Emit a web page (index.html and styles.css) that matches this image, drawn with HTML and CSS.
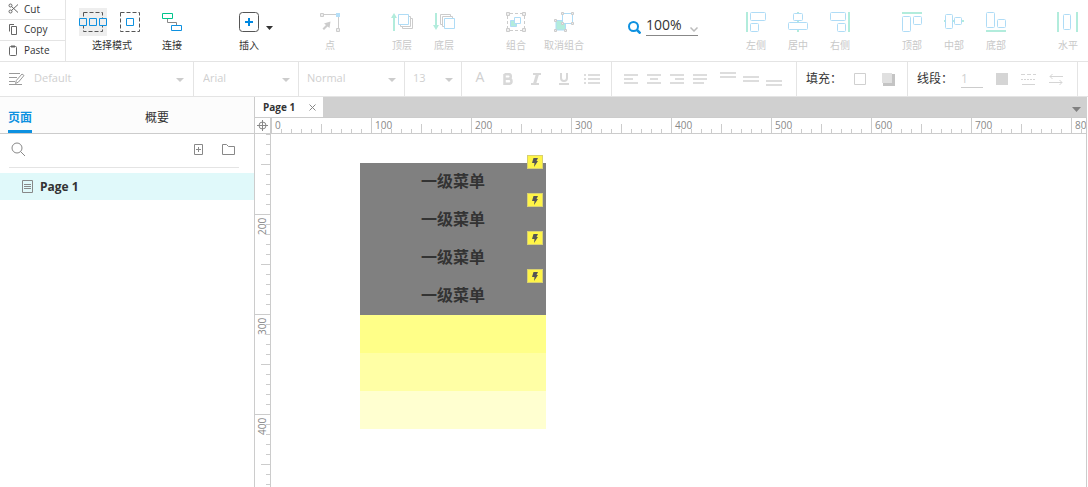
FILE: index.html
```html
<!DOCTYPE html>
<html lang="zh-CN">
<head>
<meta charset="utf-8">
<title>Page 1</title>
<link rel="stylesheet" href="styles.css">
</head>
<body>
<header class="toolbar">
  <div class="clipboard">
    <button class="clip"><svg width="11" height="11" viewBox="0 0 11 11" fill="none" stroke="#666"><circle cx="2.5" cy="2.5" r="1.5"/><circle cx="2.5" cy="8.5" r="1.5"/><path d="M3.5 3.5L10 9.5M3.5 7.5L10 1.5"/></svg>Cut</button>
    <button class="clip"><svg width="11" height="11" viewBox="0 0 11 11" fill="none" stroke="#666"><path d="M1.500 7.500V.500H6M3.500 2.500h5v8h-5z"/></svg>Copy</button>
    <button class="clip"><svg width="11" height="11" viewBox="0 0 11 11" fill="none" stroke="#666"><rect x="1.500" y="1.500" width="7" height="9" rx="1"/><path d="M3 1.500h4" stroke-width="2"/></svg>Paste</button>
  </div>
  <div class="tools">
    <button class="tool tool-mode">
      <span class="icons">
        <svg class="picked" width="28" height="28" viewBox="0 0 28 28" fill="none"><rect x="4.500" y="4.500" width="19" height="19" stroke="#555" stroke-dasharray="4 2"/><g fill="#eee" stroke="#0e91e0"><path d="M.5 10.500h7v7h-7zM10.500 10.500h7v7h-7zM20.500 10.500h7v7h-7z"/></g></svg>
        <svg width="20" height="20" viewBox="0 0 20 20" fill="none"><rect x=".5" y=".5" width="19" height="19" stroke="#555" stroke-dasharray="4 2"/><path d="M6.500 6.500h7v7h-7z" stroke="#0e91e0"/></svg>
      </span>
      <span>选择模式</span>
    </button>
    <button class="tool"><span class="icons"><svg width="20" height="20" viewBox="0 0 20 20" fill="none"><path d="M5.500 7v3.500h9V13" stroke="#888"/><path d="M.5 1.500h10v5H.5z" stroke="#00c48c"/><path d="M9.500 13.500h10v5h-10z" stroke="#0e91e0"/></svg></span><span>连接</span></button>
    <button class="tool tool-insert"><span class="icons"><svg width="20" height="20" viewBox="0 0 20 20" fill="none"><rect x=".5" y=".5" width="19" height="19" rx="3" stroke="#555"/><path d="M10 6v8M6 10h8" stroke="#0087e0" stroke-width="2"/></svg><svg class="insert-caret" width="7" height="4" viewBox="0 0 7 4"><path d="M0 0h7L3.500 4z" fill="#333"/></svg></span><span>插入</span></button>
    <button class="tool off" disabled><span class="icons"><svg width="20" height="20" viewBox="0 0 20 20" fill="none"><path d="M3 2.500h13M18.500 4v12" stroke="#ccc"/><path d="M.5 1.500h3v3h-3zM16.500 16.500h3v3h-3z" stroke="#ccc" fill="#eee"/><path d="M16 1h4v4h-4z" fill="#b5dff8"/><path d="M10.500 9.500L9.500 16 7.500 14.500 4 18l-1.500-1.500L6 13 4 11.500z" fill="#ccc"/></svg></span><span>点</span></button>
    <div class="group">
      <button class="tool off" disabled><span class="icons"><svg width="22" height="20" viewBox="0 0 22 20" fill="none"><path d="M3 19V5" stroke="#b2ecdc" stroke-width="2"/><path d="M0 6l3-5 3 5z" fill="#b2ecdc"/><path d="M18 4.500h1.500v10H9.500V13M20 6.500h1.500v10h-10V15" stroke="#ccc"/><path d="M7.500 2.500h10v10h-10z" stroke="#afdcf6"/></svg></span><span>顶层</span></button>
      <button class="tool off" disabled><span class="icons"><svg width="22" height="20" viewBox="0 0 22 20" fill="none"><path d="M3 1v14" stroke="#b2ecdc" stroke-width="2"/><path d="M0 13l3 5 3-5z" fill="#b2ecdc"/><path d="M9 12.500H7.500v-10h10V4M11 14.500H9.500v-10h10V6" stroke="#ccc"/><path d="M11.500 6.500h10v10h-10z" stroke="#afdcf6"/></svg></span><span>底层</span></button>
    </div>
    <div class="group">
      <button class="tool off" disabled><span class="icons"><svg width="20" height="20" viewBox="0 0 20 20" fill="none"><path d="M4 1.500h12M4 18.500h12M1.500 4v12M18.500 4v12" stroke="#ccc" stroke-dasharray="3 2"/><path d="M.5.5h3v3h-3zM16.500.5h3v3h-3zM.5 16.500h3v3h-3zM16.500 16.500h3v3h-3z" stroke="#ccc" fill="#eee"/><path d="M4.500 8.500h6v6h-6z" fill="#b2ecdc" stroke="#afdcf6"/><path d="M8.500 5.500h6v6h-6z" fill="#fff" stroke="#afdcf6"/></svg></span><span>组合</span></button>
      <button class="tool tool-wide off" disabled><span class="icons"><svg width="20" height="20" viewBox="0 0 20 20" fill="none"><path d="M2 8.500h9.500V18H2z" fill="#b2ecdc" stroke="#afdcf6"/><path d="M8.500 1.500h10v10h-10z" fill="#fff" stroke="#afdcf6"/><path d="M7.500.5h2v2h-2zM17.500.5h2v2h-2zM7.500 10.500h2v2h-2zM17.500 10.500h2v2h-2zM.5 7.500h2v2h-2zM.5 17.500h2v2h-2zM10.500 17.500h2v2h-2z" fill="#eee" stroke="#ccc"/></svg></span><span>取消组合</span></button>
    </div>
    <label class="zoom">
      <svg width="13" height="13" viewBox="0 0 13 13" fill="none" stroke="#0e91e0" stroke-width="2"><circle cx="5.500" cy="5.500" r="4.500"/><path d="M9 9l3.500 3.500" stroke-width="2.500"/></svg>
      <span class="zoom-box"><select class="bare" aria-label="Zoom"><option>100%</option></select><svg width="8" height="5" viewBox="0 0 8 5" fill="none" stroke="#bbb" stroke-width="1.500"><path d="M.5.500L4 4 7.500.500"/></svg></span>
    </label>
    <div class="group">
      <button class="tool off" disabled><span class="icons"><svg width="20" height="20" viewBox="0 0 20 20" fill="none"><path d="M0 0h2v20H0z" fill="#b2ecdc"/><g stroke="#afdcf6"><rect x="4.500" y=".5" width="15" height="8" rx="1"/><rect x="4.500" y="11.500" width="8" height="8" rx="1"/></g></svg></span><span>左侧</span></button>
      <button class="tool off" disabled><span class="icons"><svg width="20" height="20" viewBox="0 0 20 20" fill="none"><path d="M9 0h2v20H9z" fill="#b2ecdc"/><g stroke="#afdcf6" fill="#fff"><rect x="5.500" y="1.500" width="9" height="7" rx="1"/><rect x=".5" y="10.500" width="19" height="7" rx="1"/></g></svg></span><span>居中</span></button>
      <button class="tool off" disabled><span class="icons"><svg width="20" height="20" viewBox="0 0 20 20" fill="none"><path d="M18 0h2v20h-2z" fill="#b2ecdc"/><g stroke="#afdcf6"><rect x=".5" y=".5" width="15" height="8" rx="1"/><rect x="7.500" y="11.500" width="8" height="8" rx="1"/></g></svg></span><span>右侧</span></button>
    </div>
    <div class="group">
      <button class="tool off" disabled><span class="icons"><svg width="20" height="20" viewBox="0 0 20 20" fill="none"><path d="M0 0h20v2H0z" fill="#b2ecdc"/><g stroke="#afdcf6"><rect x=".5" y="4.500" width="8" height="15" rx="1"/><rect x="11.500" y="4.500" width="8" height="8" rx="1"/></g></svg></span><span>顶部</span></button>
      <button class="tool off" disabled><span class="icons"><svg width="20" height="20" viewBox="0 0 20 20" fill="none"><path d="M0 8h20v2H0z" fill="#b2ecdc"/><g stroke="#afdcf6" fill="#fff"><rect x="1.500" y="2.500" width="7" height="14" rx="1"/><rect x="10.500" y="5.500" width="7" height="7" rx="1"/></g></svg></span><span>中部</span></button>
      <button class="tool off" disabled><span class="icons"><svg width="20" height="20" viewBox="0 0 20 20" fill="none"><path d="M0 18h20v2H0z" fill="#b2ecdc"/><g stroke="#afdcf6"><rect x=".5" y=".5" width="8" height="15" rx="1"/><rect x="11.500" y="7.500" width="8" height="8" rx="1"/></g></svg></span><span>底部</span></button>
    </div>
    <button class="tool off" disabled><span class="icons"><svg width="22" height="20" viewBox="0 0 22 20" fill="none"><path d="M0 0h2v20H0zM19 0h2v20h-2z" fill="#b2ecdc"/><rect x="6.500" y="2.500" width="7" height="15" rx="1" stroke="#afdcf6"/></svg></span><span>水平</span></button>
  </div>
</header>

<div class="formatbar">
  <label class="cell cell-style"><svg width="16" height="14" viewBox="0 0 16 14" fill="none" stroke="#999"><path d="M0 1.500h11M0 5.500h8M0 9.500h6M0 12.500h13"/><path d="M6.500 11.500l.8-3L13 2l2 1.500L9.500 10z" fill="#fff"/></svg><select class="bare" aria-label="Style" disabled><option>Default</option></select><i class="caret"></i></label>
  <label class="cell cell-font"><select class="bare" aria-label="Font" disabled><option>Arial</option></select><i class="caret"></i></label>
  <label class="cell cell-weight"><select class="bare" aria-label="Weight" disabled><option>Normal</option></select><i class="caret"></i></label>
  <label class="cell cell-size"><select class="bare" aria-label="Size" disabled><option>13</option></select><i class="caret"></i></label>
  <div class="cell cell-text">
    <button class="fmt color" disabled>A</button>
    <button class="fmt" aria-label="Bold" disabled><svg width="10" height="12" viewBox="0 0 10 12" fill="none" stroke="#d8d8d8" stroke-width="2.500"><path d="M1.500 1.200H5.500a2.300 2.300 0 0 1 0 4.600H1.500H6a2.500 2.500 0 0 1 0 5H1.500V1"/></svg></button>
    <button class="fmt" aria-label="Italic" disabled><svg width="10" height="12" viewBox="0 0 10 12" fill="none" stroke="#d8d8d8" stroke-width="2"><path d="M2 1h8M0 11h8"/><path d="M6.500 1l-3 10" stroke-width="3"/></svg></button>
    <button class="fmt" aria-label="Underline" disabled><svg width="10" height="12" viewBox="0 0 10 12" fill="none" stroke="#d8d8d8" stroke-width="2"><path d="M2 0v5a3 3 0 0 0 6 0V0M0 11h10"/></svg></button>
    <button class="fmt" aria-label="List" disabled><svg width="16" height="12" viewBox="0 0 16 12" fill="#ddd"><path d="M0 1h2v2H0zM4 1h12v2H4zM0 5h2v2H0zM4 5h12v2H4zM0 9h2v2H0zM4 9h12v2H4z"/></svg></button>
  </div>
  <div class="cell cell-align">
    <button class="alg" aria-label="Align left" disabled><svg width="14" height="10" viewBox="0 0 14 10" fill="#ddd"><path d="M0 0h14v2H0zM0 4h9v2H0zM0 8h14v2H0z"/></svg></button>
    <button class="alg" aria-label="Align center" disabled><svg width="14" height="10" viewBox="0 0 14 10" fill="#ddd"><path d="M0 0h14v2H0zM3 4h8v2H3zM0 8h14v2H0z"/></svg></button>
    <button class="alg" aria-label="Align right" disabled><svg width="14" height="10" viewBox="0 0 14 10" fill="#ddd"><path d="M0 0h14v2H0zM5 4h9v2H5zM0 8h14v2H0z"/></svg></button>
    <button class="alg" aria-label="Justify" disabled><svg width="14" height="10" viewBox="0 0 14 10" fill="#ddd"><path d="M0 0h14v2H0zM0 4h14v2H0zM0 8h11v2H0z"/></svg></button>
    <button class="alg first-valign" aria-label="Top" disabled><svg width="16" height="14" viewBox="0 0 16 14" fill="#ddd"><path d="M0 0h16v2H0zM0 4h16v2H0z"/></svg></button>
    <button class="alg" aria-label="Middle" disabled><svg width="16" height="14" viewBox="0 0 16 14" fill="#ddd"><path d="M0 4h16v2H0zM0 8h16v2H0z"/></svg></button>
    <button class="alg" aria-label="Bottom" disabled><svg width="16" height="14" viewBox="0 0 16 14" fill="#ddd"><path d="M0 8h16v2H0zM0 12h16v2H0z"/></svg></button>
  </div>
  <div class="cell cell-fill"><span>填充：</span>
    <button class="swatch" aria-label="Fill color" disabled><svg width="12" height="12" viewBox="0 0 12 12"><path d="M.5.5h11v11H.5z" fill="#fff" stroke="#d0d0d0"/></svg></button>
    <button class="swatch" aria-label="Shadow" disabled><svg width="13" height="13" viewBox="0 0 13 13"><path d="M1 1h12v12H1z" fill="#c4c4c4"/><path d="M0 0h10v10H0z" fill="#e0e0e0"/></svg></button>
  </div>
  <div class="cell cell-line"><label for="line-width">线段：</label>
    <input id="line-width" class="line-width" value="1" disabled>
    <button class="swatch" aria-label="Line color" disabled><svg width="12" height="12" viewBox="0 0 12 12"><path d="M0 0h12v12H0z" fill="#d5d5d5"/></svg></button>
    <button class="swatch" aria-label="Line style" disabled><svg width="15" height="12" viewBox="0 0 15 12" stroke="#d5d5d5"><path d="M0 1.500h15" stroke-dasharray="4 2"/><path d="M0 6.500h15" stroke-dasharray="2 1"/><path d="M1 11.500h13"/></svg></button>
    <button class="swatch" aria-label="Arrows" disabled><svg width="14" height="12" viewBox="0 0 14 12" fill="none" stroke="#d5d5d5"><path d="M14 3.500H1M3.500 1L1 3.500 3.500 6M0 9.500h13M10.500 7L13 9.500 10.500 12"/></svg></button>
  </div>
</div>

<div class="body">
  <aside class="side">
    <nav class="side-tabs"><button class="side-tab active">页面</button><button class="side-tab">概要</button></nav>
    <div class="side-tools">
      <button aria-label="Search"><svg width="15" height="15" viewBox="0 0 15 15" fill="none" stroke="#888"><circle cx="6" cy="6" r="5"/><path d="M9.500 9.500L14 14"/></svg></button>
      <button class="add" aria-label="Add page"><svg width="9" height="11" viewBox="0 0 9 11" fill="none" stroke="#888"><path d="M.5.5h8v10h-8zM2 5.500h5M4.500 3v5"/></svg></button>
      <button aria-label="Add folder"><svg width="13" height="11" viewBox="0 0 13 11" fill="none" stroke="#888"><path d="M.5 10.500V.5h4l2 2h6v8z"/></svg></button>
    </div>
    <button class="page-item"><svg width="11" height="13" viewBox="0 0 11 13" fill="none" stroke="#888"><path d="M.5.5h10v12H.5zM2 4.500h7M2 6.500h7M2 8.500h7"/></svg>Page 1</button>
  </aside>
  <main class="main">
    <div class="doc-tabs">
      <div class="doc-tab"><span>Page 1</span><button aria-label="Close"><svg width="7" height="7" viewBox="0 0 7 7" stroke="#888"><path d="M.5.5l6 6M6.500.5l-6 6"/></svg></button></div>
      <button class="more" aria-label="All pages"><svg width="9" height="5" viewBox="0 0 9 5" fill="#808080"><path d="M0 0h9L4.500 5z"/></svg></button>
    </div>
    <div class="stage">
      <div class="origin"><svg width="11" height="11" viewBox="0 0 11 11" fill="none" stroke="#888"><circle cx="5.500" cy="5.500" r="3.500"/><path d="M0 5.500h11M5.500 0v11"/></svg></div>
      <ol class="ruler-x"><li>0</li><li>100</li><li>200</li><li>300</li><li>400</li><li>500</li><li>600</li><li>700</li><li>800</li></ol>
      <ol class="ruler-y"><li>100</li><li>200</li><li>300</li><li>400</li></ol>
      <div class="canvas">
        <ul class="menu">
          <li>一级菜单<span class="bolt"><svg width="6" height="9" viewBox="0 0 6 9"><path d="M1.500 0H6L4.500 3H6L2 9l.5-4H0z" fill="#555"/></svg></span></li>
          <li>一级菜单<span class="bolt"><svg width="6" height="9" viewBox="0 0 6 9"><path d="M1.500 0H6L4.500 3H6L2 9l.5-4H0z" fill="#555"/></svg></span></li>
          <li>一级菜单<span class="bolt"><svg width="6" height="9" viewBox="0 0 6 9"><path d="M1.500 0H6L4.500 3H6L2 9l.5-4H0z" fill="#555"/></svg></span></li>
          <li>一级菜单<span class="bolt"><svg width="6" height="9" viewBox="0 0 6 9"><path d="M1.500 0H6L4.500 3H6L2 9l.5-4H0z" fill="#555"/></svg></span></li>
          <li class="tint-1"></li>
          <li class="tint-2"></li>
          <li class="tint-3"></li>
        </ul>
      </div>
    </div>
  </main>
</div>
</body>
</html>
```

FILE: styles.css
```css
* { box-sizing: border-box; }
body {
  margin: 0;
  height: 100vh;
  display: flex;
  flex-direction: column;
  overflow: hidden;
  background: #fff;
  color: #333;
  font: 11px/16px "Open Sans", "Noto Sans CJK SC", sans-serif;
}
button, select, input {
  margin: 0;
  padding: 0;
  border: 0;
  background: none;
  color: inherit;
  font: inherit;
}
svg { display: block; flex: none; }
ol, ul { margin: 0; padding: 0; list-style: none; }
.bare { appearance: none; opacity: 1; }

.toolbar { display: flex; flex: none; border-bottom: 1px solid #e4e4e4; }
.clipboard {
  flex: none;
  width: 66px;
  display: grid;
  grid-template-rows: 20px 21px 20px;
  border-right: 1px solid #e4e4e4;
}
.clip {
  display: flex;
  align-items: center;
  gap: 5px;
  padding: 0 8px 2px;
  border-bottom: 1px solid #e4e4e4;
  font-size: 10px;
}
.clip:last-child { border-bottom: 0; }
.tools { display: flex; flex: 1; min-width: 0; padding-left: 13px; overflow: hidden; }
.tools > * { flex: none; }
.group { display: flex; margin-right: 30px; }
.tool {
  width: 42px;
  padding-top: 8px;
  display: flex;
  flex-direction: column;
  align-items: center;
  font-size: 10px;
  line-height: 16px;
  white-space: nowrap;
}
.tool.off { color: #c8c8c8; }
.tools > .tool.off { margin-right: 30px; }
.tools > .tool:last-child { margin-right: 0; }
.tool-mode { width: 66px; margin-right: 6px; }
.tool-mode .icons { width: 66px; }
.tool-wide { width: 54px; }
.tool-insert { margin: 0 39px 0 35px; }
.icons { position: relative; display: flex; align-items: center; justify-content: center; gap: 13px; height: 28px; }
.picked { background: #eee; }
.icons + span { padding-top: 1px; }
.tool-mode .icons { justify-content: flex-start; }
.insert-caret { position: absolute; left: 27px; bottom: 6px; }
.zoom { display: flex; align-items: center; gap: 5px; width: 70px; height: 37px; margin: 0 37px 0 7px; padding-top: 18px; }
.zoom-box { display: flex; flex: 1; align-items: center; height: 21px; margin-bottom: 4px; border-bottom: 1px solid #888; font-size: 14px; line-height: 20px; }
.zoom-box .bare { flex: 1; min-width: 0; }
.zoom-box svg { margin-top: 8px; }

.formatbar { display: flex; flex: none; height: 35px; overflow: hidden; border-bottom: 1px solid #e4e4e4; }
.cell { display: flex; flex: none; align-items: center; border-right: 1px solid #e4e4e4; color: #d0d0d0; }
.cell .bare { flex: 1; min-width: 0; height: 18px; margin-bottom: 2px; }
.cell-style { width: 194px; padding: 0 9px; gap: 9px; }
.cell-font { width: 105px; padding: 0 8px 0 9px; }
.cell-weight { width: 106px; padding: 0 8px; }
.cell-size { width: 57px; padding: 0 8px; }
.caret { border: 4px solid transparent; border-top-color: #ccc; border-bottom: 0; margin-top: 2px; }
.cell-text { width: 150px; padding-left: 4px; }
.cell-align { width: 185px; padding-left: 7px; }
.fmt, .alg, .swatch { display: flex; align-items: center; justify-content: center; }
.fmt { width: 28px; }
.color { font-size: 14px; padding-bottom: 4px; }
.alg { width: 23px; }
.first-valign { margin-left: 5px; }
.cell-fill, .cell-line { padding-left: 9px; font-size: 12px; }
.cell-fill span, .cell-line label { color: #333; }
.cell-fill { width: 111px; gap: 16px; }
.cell-fill span { width: 32px; white-space: nowrap; }
.cell-line { width: 170px; gap: 13px; }
.cell-line label { width: 31px; white-space: nowrap; }
.line-width { width: 22px; border-bottom: 1px solid #ccc; }

.body { flex: 1; min-height: 0; display: flex; }
.side { flex: none; width: 255px; border-right: 1px solid #ccc; }
.side-tabs { display: flex; height: 37px; padding: 0 8px; gap: 113px; background: #fcfcfc; border-bottom: 1px solid #ccc; font-size: 12px; }
.side-tab { padding-top: 8px; border-bottom: 3px solid transparent; }
.side-tab.active { color: #0e91e0; border-color: #0e91e0; font-weight: 700; }
.side-tools { display: flex; align-items: center; gap: 19px; height: 34px; margin: 0 15px 5px 9px; padding: 0 4px 3px 2px; border-bottom: 1px solid #e4e4e4; }
.add { margin-left: auto; }
.page-item { display: flex; align-items: center; gap: 7px; width: 100%; height: 27px; padding-left: 22px; background: #e0f9fa; font-size: 12px; font-weight: 700; }

.main { flex: 1; min-width: 0; display: flex; flex-direction: column; margin-right: 1px; }
.doc-tabs { display: flex; justify-content: space-between; height: 21px; background: #d0d0d0; border-bottom: 1px solid #ccc; }
.doc-tab { display: flex; align-items: center; justify-content: space-between; width: 68px; padding: 0 7px 0 8px; background: #fff; font-size: 10px; font-weight: 700; }
.more { padding: 4px 6px 0 0; }
.stage { flex: 1; min-height: 0; display: grid; grid-template: 16px minmax(0, 1fr) / 16px minmax(0, 1fr); border-right: 1px solid #ccc; }
.origin { display: flex; align-items: center; justify-content: center; border-right: 1px solid #ccc; border-bottom: 1px solid #ccc; }
.ruler-x, .ruler-y { display: flex; overflow: hidden; color: #888; font-size: 10px; line-height: 15px; }
.ruler-x { border-bottom: 1px solid #ccc; }
.ruler-x li {
  flex: 0 0 100px;
  padding-left: 3px;
  border-left: 1px solid #ccc;
  background:
    repeating-linear-gradient(90deg, #ccc 0 1px, transparent 1px 10px) 0 100% / 100% 4px no-repeat border-box,
    repeating-linear-gradient(90deg, #ccc 0 1px, transparent 1px 50px) 0 100% / 100% 9px no-repeat border-box;
}
.ruler-y { flex-direction: column; border-right: 1px solid #ccc; }
.ruler-y li {
  flex: 0 0 100px;
  padding-bottom: 3px;
  border-bottom: 1px solid #ccc;
  writing-mode: vertical-rl;
  text-align: right;
  transform: rotate(180deg);
  background:
    repeating-linear-gradient(0deg, #ccc 0 1px, transparent 1px 10px) 0 0 / 4px 100% no-repeat border-box,
    repeating-linear-gradient(0deg, #ccc 0 1px, transparent 1px 50px) 0 0 / 9px 100% no-repeat border-box;
}
.ruler-y li:first-child { margin-top: -20px; }

.canvas { padding: 29px 0 0 89px; overflow: hidden; }
.menu { width: 186px; }
.menu li { position: relative; height: 38px; background: #808080; font-size: 16px; font-weight: 700; line-height: 36px; text-align: center; }
.menu .tint-1 { background: #ffff88; }
.menu .tint-2 { background: #ffffa5; }
.menu .tint-3 { background: #ffffd0; }
.bolt { position: absolute; top: -8px; right: 3px; display: flex; align-items: center; justify-content: center; width: 16px; height: 14px; background: #fff547; border: 1px solid #d8d070; }
```
